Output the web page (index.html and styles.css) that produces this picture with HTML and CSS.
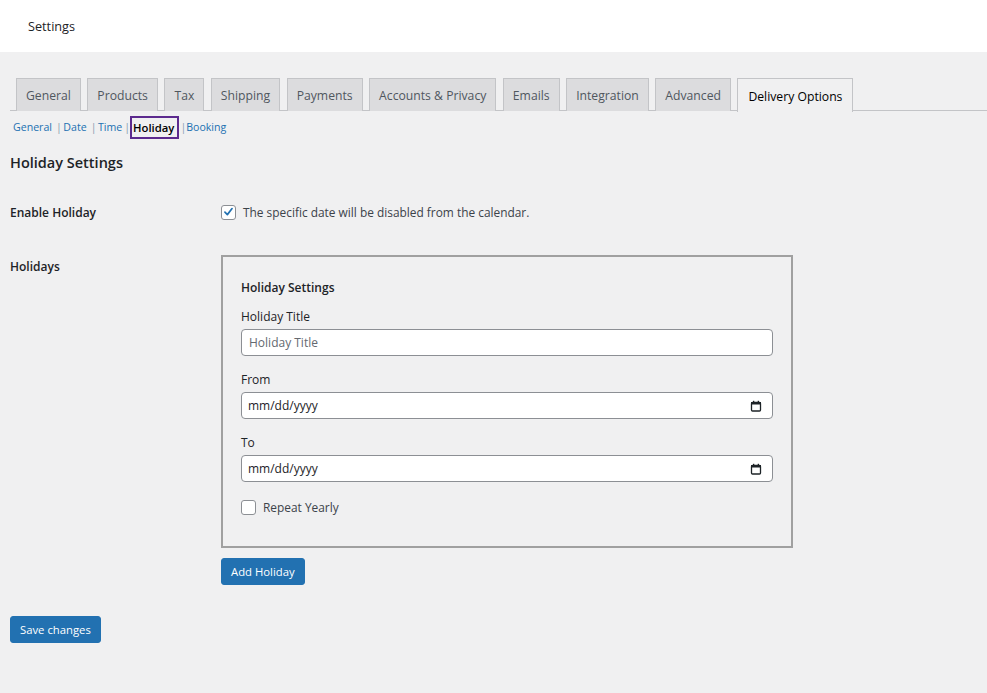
FILE: index.html
```html
<!DOCTYPE html>
<html>
<head>
<meta charset="utf-8">
<link rel="stylesheet" href="styles.css">
</head>
<body>
<header class="topbar"><span class="topbar-title">Settings</span></header>
<main class="wrap">
  <nav class="tabs">
    <span class="tab">General</span>
    <span class="tab">Products</span>
    <span class="tab">Tax</span>
    <span class="tab">Shipping</span>
    <span class="tab">Payments</span>
    <span class="tab">Accounts &amp; Privacy</span>
    <span class="tab">Emails</span>
    <span class="tab">Integration</span>
    <span class="tab">Advanced</span>
    <span class="tab tab-active">Delivery Options</span>
  </nav>
  <div class="subnav">
    <a class="sublink">General</a><span class="sep">|</span>
    <a class="sublink">Date</a><span class="sep">|</span>
    <a class="sublink">Time</a><span class="sep sep-before">|</span>
    <a class="sublink current">Holiday</a><span class="sep sep-after">|</span>
    <a class="sublink">Booking</a>
  </div>
  <h2 class="page-heading">Holiday Settings</h2>

  <div class="row row-enable">
    <div class="row-label">Enable Holiday</div>
    <div class="row-field">
      <label class="check-line">
        <span class="cb cb-checked">
          <svg viewBox="0 0 16 16" width="14" height="14"><path d="M3.6 8.2 L6.6 11.2 L12.4 3.8" fill="none" stroke="#2271b1" stroke-width="2.1" stroke-linecap="round" stroke-linejoin="round"/></svg>
        </span>
        <span>The specific date will be disabled from the calendar.</span>
      </label>
    </div>
  </div>

  <div class="row row-holidays">
    <div class="row-label">Holidays</div>
    <div class="row-field">
      <div class="holiday-box">
        <div class="box-title">Holiday Settings</div>
        <div class="field">
          <div class="field-label">Holiday Title</div>
          <div class="input"><span class="placeholder">Holiday Title</span></div>
        </div>
        <div class="field">
          <div class="field-label">From</div>
          <div class="input input-date"><span class="date-text">mm/dd/yyyy</span>
            <svg class="cal" viewBox="0 0 12 12" width="12" height="12"><rect x="1.5" y="2.5" width="9" height="8.5" rx="1" fill="none" stroke="#1d2327" stroke-width="1.3"/><rect x="1" y="2" width="10" height="2.5" fill="#1d2327"/><rect x="3" y="0.8" width="1.3" height="2" fill="#1d2327"/><rect x="7.7" y="0.8" width="1.3" height="2" fill="#1d2327"/></svg>
          </div>
        </div>
        <div class="field">
          <div class="field-label">To</div>
          <div class="input input-date"><span class="date-text">mm/dd/yyyy</span>
            <svg class="cal" viewBox="0 0 12 12" width="12" height="12"><rect x="1.5" y="2.5" width="9" height="8.5" rx="1" fill="none" stroke="#1d2327" stroke-width="1.3"/><rect x="1" y="2" width="10" height="2.5" fill="#1d2327"/><rect x="3" y="0.8" width="1.3" height="2" fill="#1d2327"/><rect x="7.7" y="0.8" width="1.3" height="2" fill="#1d2327"/></svg>
          </div>
        </div>
        <label class="check-line repeat">
          <span class="cb"></span>
          <span>Repeat Yearly</span>
        </label>
      </div>
      <button class="btn btn-add">Add Holiday</button>
    </div>
  </div>

  <button class="btn btn-save">Save changes</button>
</main>
</body>
</html>
```
FILE: styles.css
```css
* { box-sizing: border-box; }
html, body { margin: 0; padding: 0; }
body {
  background: #f0f0f1;
  font-family: "Open Sans", "Noto Sans", "Liberation Sans", sans-serif;
  font-size: 12px;
  color: #3c434a;
  width: 987px;
  height: 693px;
  overflow: hidden;
}
.topbar {
  background: #fff;
  height: 52px;
  display: flex;
  align-items: center;
  padding-left: 28px;
}
.topbar-title { color: #1d2327; font-size: 12.7px; }
.wrap { padding: 26px 0 0 10px; }
.tabs {
  display: flex;
  gap: 6.5px;
  padding-left: 6px;
  border-bottom: 1px solid #c3c4c7;
  height: 33px;
}
.tab {
  display: flex;
  align-items: center;
  height: 33px;
  padding: 1px 9px 0 9px;
  border: 1px solid #c3c4c7;
  border-bottom: none;
  background: #dcdcde;
  color: #50575e;
  font-size: 12.2px;
  font-weight: 500;
}
.tab-active {
  background: #f0f0f1;
  color: #000;
  height: 34px;
  padding: 1px 10px 0 10px;
}
.subnav {
  display: flex;
  align-items: center;
  height: 32px;
  padding-left: 3px;
  font-size: 10.6px;
}
.sublink { color: #2271b1; }
.sep { color: #8a9db0; margin: 0 1.5px 0 4px; }
.sep-before { margin: 0 0 0 2px; }
.sep-after { margin: 0 0 0 1px; }
.sublink.current {
  color: #000;
  font-weight: 600;
  border: 2px solid #5c2a8e;
  height: 23px;
  display: flex;
  align-items: center;
  padding: 0 3px 0 1px;
  font-size: 11.3px;
}
.page-heading {
  margin: 10px 0 0 0;
  font-size: 14.5px;
  font-weight: 600;
  color: #1d2327;
  line-height: 20px;
}
.row { display: flex; }
.row-label {
  width: 211px;
  flex: none;
  font-weight: 600;
  color: #1d2327;
  font-size: 12px;
}
.row-enable { margin-top: 29px; height: 20px; align-items: center; }
.row-holidays { margin-top: 33px; }
.row-holidays .row-label { padding-top: 3px; }
.check-line {
  display: flex;
  align-items: center;
  gap: 7px;
  font-size: 11.9px;
  color: #3c434a;
}
.cb {
  width: 15px;
  height: 15px;
  border: 1px solid #8c8f94;
  border-radius: 3px;
  background: #fff;
  display: flex;
  align-items: center;
  justify-content: center;
}
.holiday-box {
  width: 572px;
  height: 293px;
  border: 2px solid #a0a0a0;
  padding: 22px 18px 0 18px;
}
.box-title { font-weight: 600; color: #1d2327; font-size: 12px; line-height: 18px; }
.field { margin-top: 11px; }
.field + .field { margin-top: 15px; }
.field-label { color: #1d2327; font-size: 12px; line-height: 18px; margin-bottom: 3px; }
.input {
  height: 27px;
  background: #fff;
  border: 1px solid #8c8f94;
  border-radius: 4px;
  display: flex;
  align-items: center;
  padding: 0 7px;
  font-size: 12px;
}
.placeholder { color: #646970; }
.date-text { color: #1d2327; flex: 1; margin-left: -1px; }
.input-date { padding-right: 10px; }
.repeat { margin-top: 17px; }
.btn {
  display: block;
  background: #2271b1;
  color: #fff;
  border: 1px solid #2271b1;
  border-radius: 3px;
  font-family: inherit;
  font-size: 11.3px;
  height: 27px;
  padding: 0 9px;
}
.btn-add { margin-top: 10px; }
.btn-save { margin-top: 31px; }
```
